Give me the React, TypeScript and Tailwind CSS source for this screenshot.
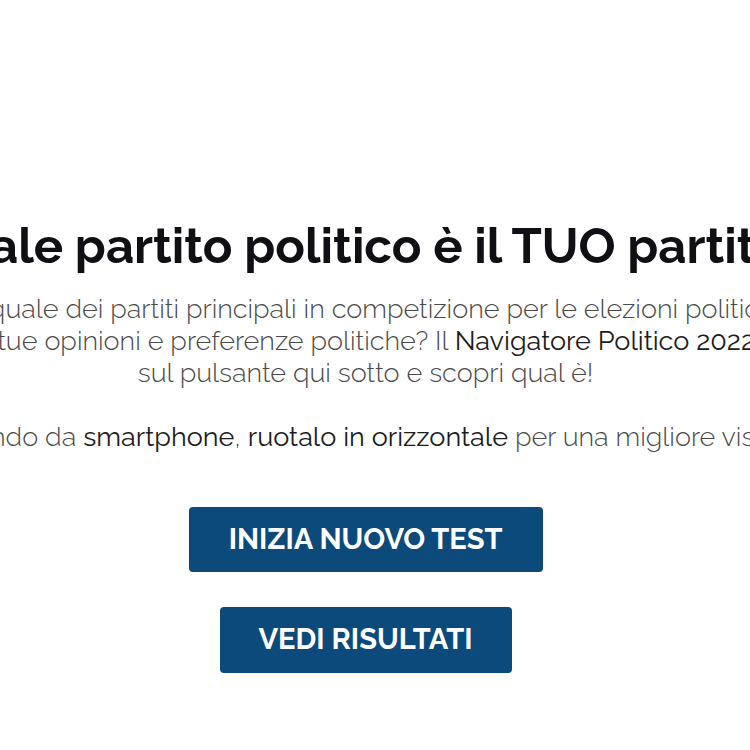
export default function App() {
  const body = "font-['Raleway','Open_Sans',sans-serif]"
  const strong = 'font-normal text-[#1c1c1c]'
  return (
    <div className="min-h-[750px] w-full overflow-hidden bg-white">
      <div className={`w-[731px] flex flex-col items-center pt-[218px] ${body}`}>
        <h1 className="whitespace-nowrap text-[49px] leading-[56px] font-bold text-[#0f0f14]">
          Quale partito politico è il TUO partito?
        </h1>

        <p className="mt-[19px] whitespace-nowrap text-center text-[27px] leading-[32px] font-light text-[#4a4a4a]">
          Vuoi sapere quale dei partiti principali in competizione per le elezioni politiche 2022 sia
          <br />
          più vicino alle tue opinioni e preferenze politiche? Il <span className={strong}>Navigatore Politico 2022</span> lo sa! Clicca
          <br />
          sul pulsante qui sotto e scopri qual è!
          <br />
          <br />
          Se stai navigando da <span className={strong}>smartphone</span>,{' '}
          <span className={strong}>ruotalo in orizzontale</span> per una migliore visualizzazione.
        </p>

        <div className="mt-[54px] flex flex-col items-center gap-[35px]">
          <button className="h-[65px] w-[354px] rounded-[4px] bg-[#0b4a7b] text-[29px] font-bold text-white">
            INIZIA NUOVO TEST
          </button>
          <button className="h-[66px] w-[292px] rounded-[4px] bg-[#0b4a7b] text-[29px] font-bold text-white">
            VEDI RISULTATI
          </button>
        </div>
      </div>
    </div>
  )
}
